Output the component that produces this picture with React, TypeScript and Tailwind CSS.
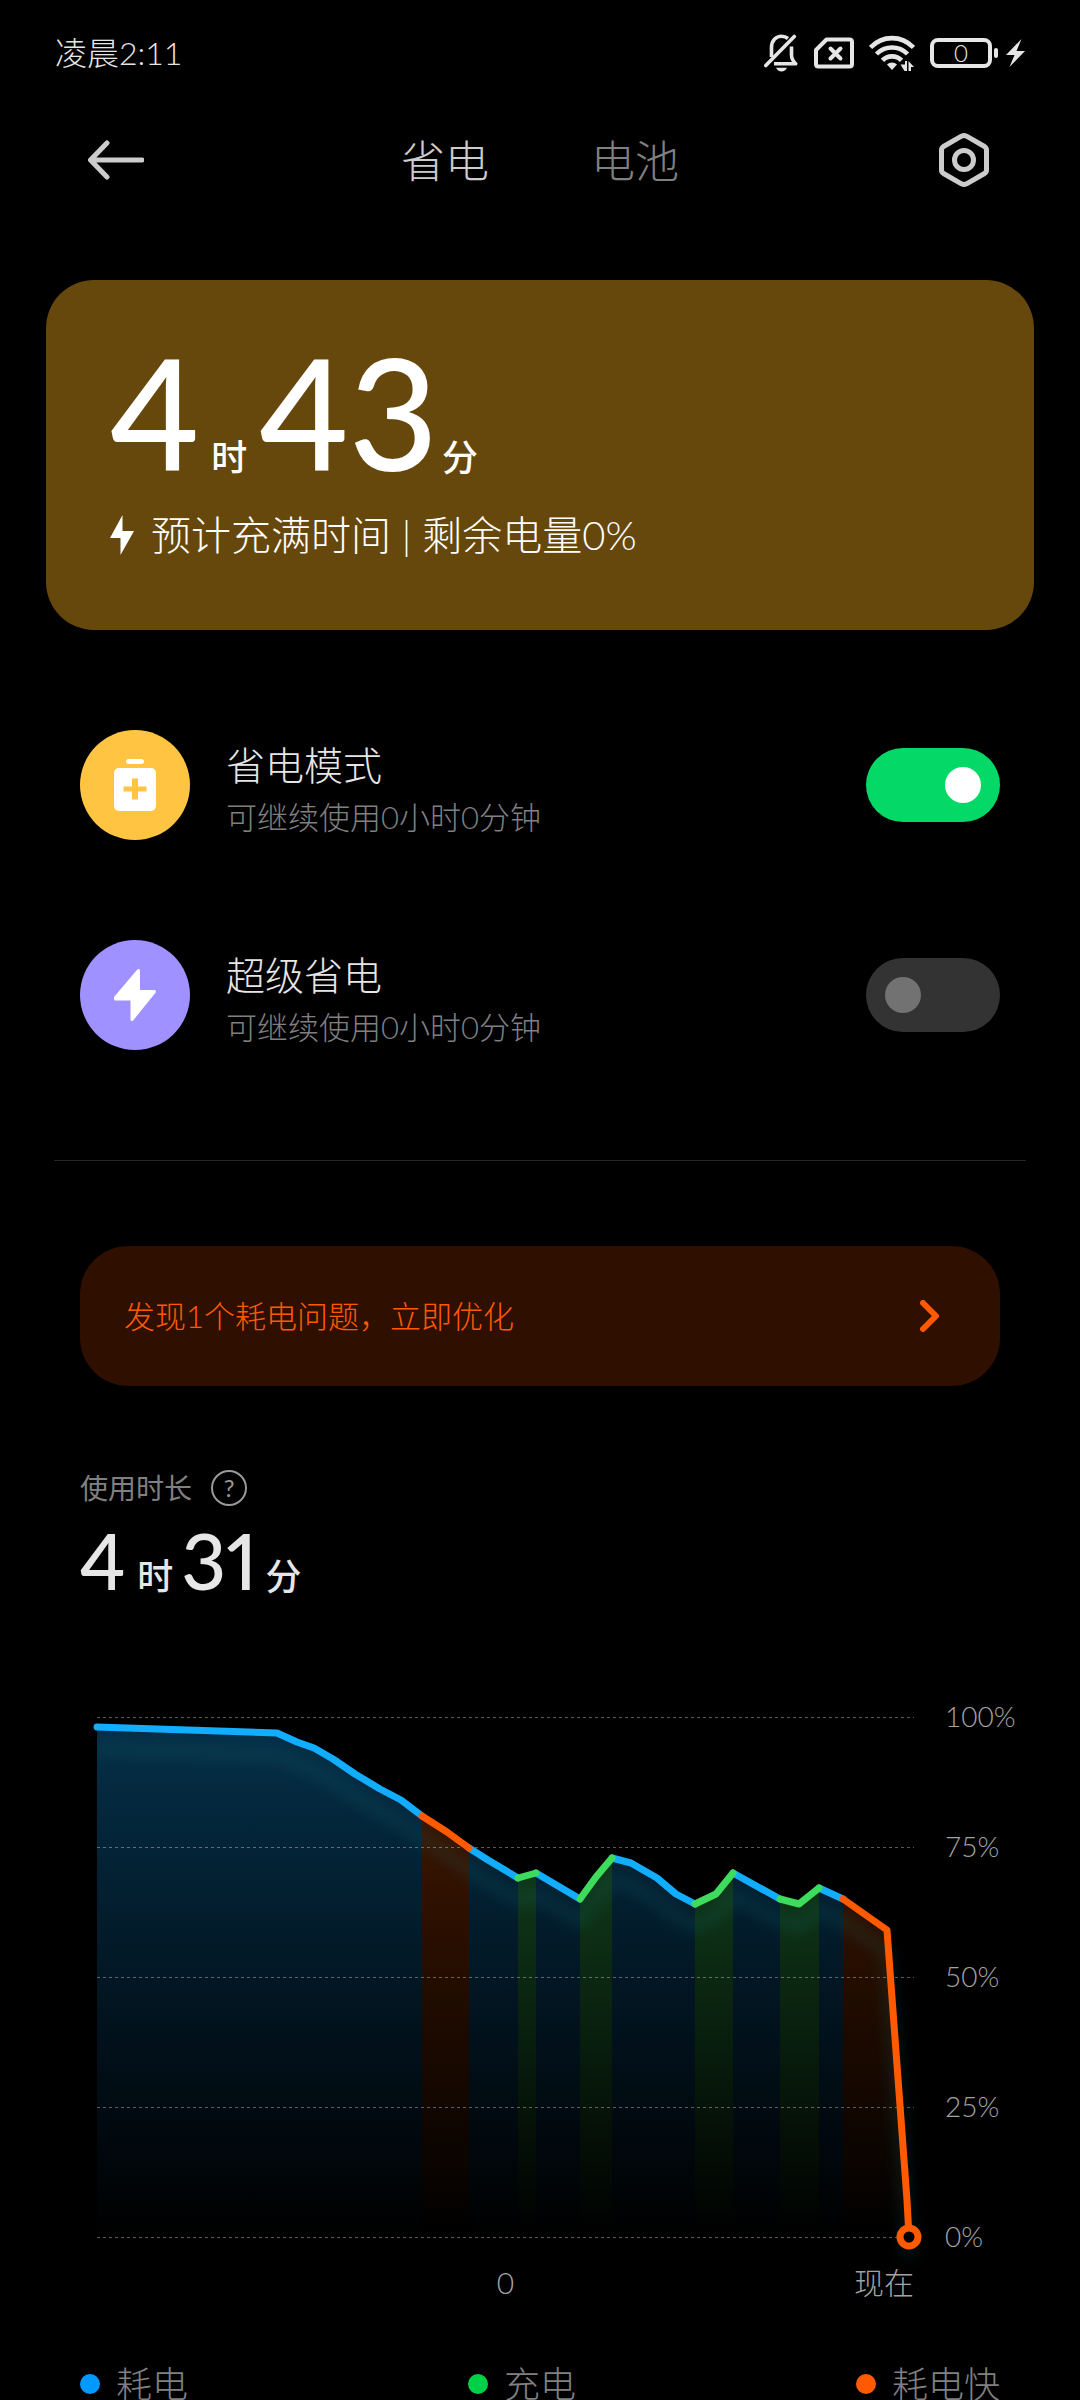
import { useState } from 'react';
import type { ReactNode } from 'react';

type Kind = 'drain' | 'charge' | 'fast';

const LINE: Record<Kind, string> = {
  drain: '#12adff',
  charge: '#3ddc5c',
  fast: '#ff5a00',
};

const SEGMENTS: { kind: Kind; points: [number, number][] }[] = [
  {
    kind: 'drain',
    points: [[17, 27], [197, 33], [217, 42], [234, 48], [253, 59], [275, 74], [300, 89], [321, 100], [342, 116]],
  },
  { kind: 'fast', points: [[342, 116], [367, 132], [389, 148]] },
  { kind: 'drain', points: [[389, 148], [408, 160], [438, 178]] },
  { kind: 'charge', points: [[438, 178], [456, 173]] },
  { kind: 'drain', points: [[456, 173], [500, 199]] },
  { kind: 'charge', points: [[500, 199], [516, 177], [532, 158]] },
  { kind: 'drain', points: [[532, 158], [551, 163], [577, 178], [596, 194], [615, 204]] },
  { kind: 'charge', points: [[615, 204], [636, 194], [653, 173]] },
  { kind: 'drain', points: [[653, 173], [700, 199]] },
  { kind: 'charge', points: [[700, 199], [719, 204], [739, 188]] },
  { kind: 'drain', points: [[739, 188], [763, 199]] },
  { kind: 'fast', points: [[763, 199], [807, 230], [827, 500], [829, 537]] },
];

const GRID = [17.5, 147.5, 277.5, 407.5, 537.5];
const BOTTOM = 537;

const toPath = (points: [number, number][]) => points.map((p) => p.join(',')).join(' ');

const toArea = (points: [number, number][]) => {
  const first = points[0][0];
  const last = points[points.length - 1][0];
  return `${first},${BOTTOM} ${toPath(points)} ${last},${BOTTOM}`;
};

const StatusBar = () => (
  <div className="flex h-[106px] items-center justify-between px-[55px] text-[#e6e6e6]">
    <span className="text-[32px] leading-10 font-light">凌晨2:11</span>
    <div className="flex items-center">
      <svg className="mr-4 h-[38px] w-[34px]" viewBox="0 0 34 38" fill="none" stroke="currentColor" strokeWidth="3.6">
        <path d="M7.5 23V13.5C7.5 6.5 12 2.3 17.5 2.3c2.6 0 4.8.8 6.5 2.2M27.5 12.5v8.5c0 3.5 1.6 6.3 4.2 8.7H10" strokeLinejoin="round" />
        <path d="M1.8 31.5L30.3 2.5" strokeLinecap="round" />
        <path d="M12 33.8h11c-1 2.4-3.1 3.7-5.5 3.7S13 36.2 12 33.8z" fill="currentColor" stroke="none" />
      </svg>
      <svg className="mr-[15px] h-8 w-10" viewBox="0 0 40 32" fill="none" stroke="currentColor" strokeWidth="4">
        <path d="M2 13L12.5 2.5H35.5Q38 2.5 38 5V27Q38 29.5 35.5 29.5H4.5Q2 29.5 2 27Z" strokeLinejoin="round" />
        <path d="M16.5 11.5l10 10M26.5 11.5l-10 10" strokeLinecap="round" />
      </svg>
      <svg className="mr-[15px] h-9 w-[46px]" viewBox="0 0 46 36" fill="none" stroke="currentColor" strokeWidth="4.6">
        <path d="M1.5 12.5C13.5 0 32.5 0 44.5 12.5" />
        <path d="M7.5 19C16 10.3 30 10.3 38.5 19" />
        <path d="M13.5 25.3C18.5 20 27.5 20 32.5 25.3" />
        <path d="M18 29.5C20.5 26.8 25.5 26.8 28 29.5L23 35Z" fill="currentColor" stroke="none" />
        <path d="M31.5 29.5h4.5v-3.5h2V36h-2.5zM39.5 36V26l5.5 6h-3v4z" fill="currentColor" stroke="none" />
      </svg>
      <div className="flex h-[30px] w-[62px] items-center justify-center rounded-lg border-4 border-current text-2xl leading-5 font-light">
        0
      </div>
      <div className="ml-0.5 h-2.5 w-1 rounded-sm bg-current" />
      <svg className="ml-2 h-7 w-[19px]" viewBox="0 0 19 28" fill="currentColor">
        <path d="M15.5 0L0 16h8.5L3.5 28L19 12h-8.5z" />
      </svg>
    </div>
  </div>
);

const Header = () => (
  <header className="flex h-[108px] items-center justify-between px-[88px] text-[#cccccc]">
    <button type="button" aria-label="返回">
      <svg className="h-14 w-14" viewBox="0 0 56 56" fill="none" stroke="currentColor" strokeWidth="5" strokeLinecap="round" strokeLinejoin="round">
        <path d="M54 28H3M19 11L2.5 28L19 45" />
      </svg>
    </button>
    <nav className="flex gap-[102px] pt-0.5 text-[44px] leading-14 font-light">
      <button type="button">省电</button>
      <button type="button" className="text-[#808080]">电池</button>
    </nav>
    <button type="button" aria-label="设置">
      <svg className="h-14 w-14" viewBox="0 0 56 56" fill="none" stroke="currentColor" strokeWidth="5" strokeLinejoin="round">
        <path d="M25.5 4.2Q28 3 30.5 4.2L48.5 14.5Q50.5 15.8 50.5 18V38Q50.5 40.2 48.5 41.5L30.5 51.8Q28 53 25.5 51.8L7.5 41.5Q5.5 40.2 5.5 38V18Q5.5 15.8 7.5 14.5Z" />
        <circle cx="28" cy="28" r="9.5" />
      </svg>
    </button>
  </header>
);

const ChargeCard = () => (
  <section className="mx-[46px] mt-[66px] rounded-[48px] bg-[#66480c] px-16 pt-[54px] pb-[66px] text-white">
    <div className="flex items-baseline font-medium">
      <span className="text-[154px] leading-[156px]">4</span>
      <span className="mx-3 text-4xl">时</span>
      <span className="text-[154px] leading-[156px]">43</span>
      <span className="ml-1 text-4xl">分</span>
    </div>
    <p className="mt-4 flex items-center text-[40px] leading-[58px] font-light">
      <svg className="mr-[17px] h-10 w-6" viewBox="0 0 24 40" fill="currentColor">
        <path d="M12.5 0L0 23h10.5v17L24 16H12.5z" />
      </svg>
      预计充满时间 | 剩余电量0%
    </p>
  </section>
);

type ModeRowProps = {
  id: string;
  title: string;
  icon: ReactNode;
  badge: string;
  defaultOn?: boolean;
};

const ModeRow = ({ id, title, icon, badge, defaultOn = false }: ModeRowProps) => {
  const [on, setOn] = useState(defaultOn);

  return (
    <div className="flex h-[110px] items-center">
      <div className={`flex h-[110px] w-[110px] items-center justify-center rounded-full text-white ${badge}`}>{icon}</div>
      <label htmlFor={id} className="ml-9 flex-1 pt-2">
        <span className="block text-[39px] leading-[56px] text-[#e6e6e6] font-light">{title}</span>
        <span className="block text-[31px] leading-12 text-[#808080] font-light">可继续使用0小时0分钟</span>
      </label>
      <input
        id={id}
        type="checkbox"
        role="switch"
        checked={on}
        onChange={() => setOn(!on)}
        className="flex h-[74px] w-[134px] appearance-none items-center rounded-full bg-[#333333] px-[19px] before:h-9 before:w-9 before:rounded-full before:bg-[#727272] checked:justify-end checked:bg-[#04d968] checked:before:bg-white"
      />
    </div>
  );
};

const BatteryIcon = () => (
  <svg className="h-[52px] w-[42px]" viewBox="0 0 42 52">
    <rect x="12" y="0" width="18" height="5" rx="2.5" fill="white" />
    <rect x="0" y="9" width="42" height="43" rx="5" fill="white" />
    <path d="M18 19.5h6v8h8.5v5H24v8h-6v-8H9.5v-5H18z" fill="#ffc542" />
  </svg>
);

const BoltIcon = () => (
  <svg className="h-[52px] w-[42px]" viewBox="0 0 42 52" fill="white" stroke="white" strokeWidth="3" strokeLinejoin="round">
    <path d="M24.5 1.5V22.5H40.5L18 50.5V30H1.5V28.5Z" />
  </svg>
);

const IssueBanner = () => (
  <a href="#optimize" className="mx-20 mt-[85px] flex h-[140px] items-center justify-between rounded-[48px] bg-[#2e0f00] pr-[59px] pl-11 text-[#ff5a00]">
    <span className="text-[31px] leading-12 font-light">发现1个耗电问题，立即优化</span>
    <svg className="h-8 w-[22px]" viewBox="0 0 22 32" fill="none" stroke="currentColor" strokeWidth="6" strokeLinecap="round" strokeLinejoin="round">
      <path d="M4 3L17 16L4 29" />
    </svg>
  </a>
);

const UsageTime = () => (
  <div className="mx-20 mt-[77px] text-[#e6e6e6]">
    <div className="flex items-center text-[#808080]">
      <span className="text-[28px] leading-[50px]">使用时长</span>
      <button type="button" aria-label="说明" className="ml-[19px] flex h-9 w-9 items-center justify-center rounded-full border-2 border-[#999999] text-2xl leading-6 text-[#999999]">
        ?
      </button>
    </div>
    <div className="mt-0.5 flex items-baseline font-medium">
      <span className="text-[78px] leading-[90px]">4</span>
      <span className="mr-2 ml-3 text-4xl">时</span>
      <span className="text-[78px] leading-[90px] proportional-nums">31</span>
      <span className="ml-2 text-4xl">分</span>
    </div>
  </div>
);

const BatteryChart = () => (
  <svg className="h-auto w-full overflow-visible" viewBox="0 0 845 552" fill="none">
    <defs>
      <linearGradient id="fill-drain" gradientUnits="userSpaceOnUse" x1="0" y1="20" x2="0" y2={BOTTOM}>
        <stop offset="0" stopColor="#053049" />
        <stop offset="0.3" stopColor="#032133" />
        <stop offset="0.7" stopColor="#010d15" />
        <stop offset="1" stopColor="#000000" />
      </linearGradient>
      <linearGradient id="fill-charge" gradientUnits="userSpaceOnUse" x1="0" y1="150" x2="0" y2={BOTTOM}>
        <stop offset="0" stopColor="#103b1a" />
        <stop offset="1" stopColor="#000000" />
      </linearGradient>
      <linearGradient id="fill-fast" gradientUnits="userSpaceOnUse" x1="0" y1="110" x2="0" y2={BOTTOM}>
        <stop offset="0" stopColor="#3b1500" />
        <stop offset="1" stopColor="#000000" />
      </linearGradient>
      <filter id="glow" filterUnits="userSpaceOnUse" x="-20" y="0" width="900" height="600">
        <feGaussianBlur stdDeviation="7" />
      </filter>
      <clipPath id="plot">
        <rect x="17" y="0" width="828" height="570" />
      </clipPath>
    </defs>
    {SEGMENTS.map((s) => (
      <polygon key={s.points[0][0]} points={toArea(s.points)} fill={`url(#fill-${s.kind})`} />
    ))}
    <g clipPath="url(#plot)">
      <polyline
        points={toPath(SEGMENTS.flatMap((s) => s.points))}
        transform="translate(0 22)"
        stroke="#1c7a80"
        strokeWidth="14"
        opacity="0.16"
        filter="url(#glow)"
      />
    </g>
    {GRID.map((y) => (
      <path key={y} d={`M17 ${y}H834`} stroke="#ffffff" strokeOpacity="0.35" strokeDasharray="3 3" />
    ))}
    {(['drain', 'charge', 'fast'] as Kind[]).map((kind) =>
      SEGMENTS.filter((s) => s.kind === kind).map((s) => (
        <polyline
          key={s.points[0][0]}
          points={toPath(s.points)}
          stroke={LINE[kind]}
          strokeWidth="7"
          strokeLinecap="round"
          strokeLinejoin="round"
        />
      )),
    )}
    <circle cx="829" cy="537" r="9" fill="black" stroke={LINE.fast} strokeWidth="7" />
  </svg>
);

const Legend = () => (
  <ul className="mx-20 mt-[62px] flex justify-between text-4xl leading-8 font-light text-[#808080]">
    <li className="flex items-center gap-4">
      <span className="h-5 w-5 rounded-full bg-[#0099ff]" />
      耗电
    </li>
    <li className="flex items-center gap-4">
      <span className="h-5 w-5 rounded-full bg-[#00d048]" />
      充电
    </li>
    <li className="flex items-center gap-4">
      <span className="h-5 w-5 rounded-full bg-[#ff5a00]" />
      耗电快
    </li>
  </ul>
);

export default function App() {
  return (
    <main lang="zh-CN" className="h-screen overflow-y-auto bg-black font-['Lato','Noto_Sans_CJK_SC',sans-serif] [scrollbar-width:none]">
      <StatusBar />
      <Header />
      <ChargeCard />
      <section className="mx-20 mt-[100px] flex flex-col gap-[100px]">
        <ModeRow id="saver" title="省电模式" icon={<BatteryIcon />} badge="bg-[#ffc542]" defaultOn />
        <ModeRow id="ultra" title="超级省电" icon={<BoltIcon />} badge="bg-[#9f91ff]" />
      </section>
      <hr className="mx-[54px] mt-[110px] border-[#262626]" />
      <IssueBanner />
      <UsageTime />
      <section className="mt-[95px] flex pr-[45px] pl-20 font-light text-[#a3a3a3]">
        <div className="flex-1">
          <BatteryChart />
          <div className="mt-1.5 grid grid-cols-3 pr-[11px] pl-[17px] text-[30px] leading-12">
            <span className="col-start-2 text-center">0</span>
            <span className="text-right">现在</span>
          </div>
        </div>
        <div className="mb-[54px] flex w-[110px] flex-col justify-between pl-5 text-[28px] leading-8">
          <span>100%</span>
          <span>75%</span>
          <span>50%</span>
          <span>25%</span>
          <span>0%</span>
        </div>
      </section>
      <Legend />
    </main>
  );
}
